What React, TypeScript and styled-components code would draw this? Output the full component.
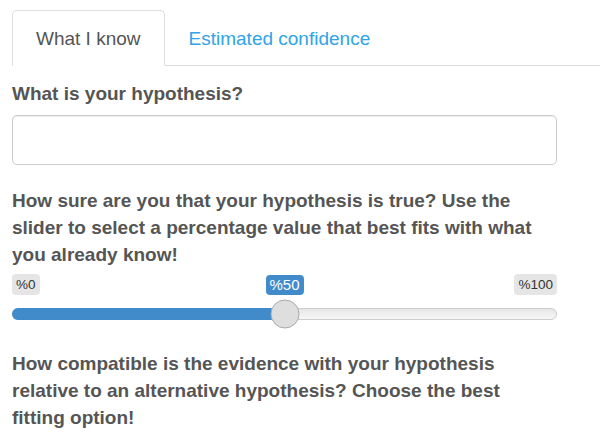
import React from "react";
import styled, { createGlobalStyle } from "styled-components";

const GlobalStyle = createGlobalStyle`
  html, body {
    margin: 0;
    padding: 0;
    background: #ffffff;
  }
  body {
    font-family: "Liberation Sans", Arial, Helvetica, sans-serif;
    color: #555555;
    font-size: 19px;
    line-height: 27px;
  }
  * { box-sizing: border-box; }
`;

const Page = styled.div`
  padding: 10px 0 0 12px;
`;

const TabList = styled.div`
  display: flex;
  border-bottom: 1px solid #dddddd;
`;

const Tab = styled.div<{ $active?: boolean }>`
  padding: 14px 23px 13px;
  margin-right: 0;
  margin-bottom: -1px;
  font-size: 19px;
  line-height: 27px;
  border: 1px solid ${(p) => (p.$active ? "#dddddd" : "transparent")};
  border-bottom-color: ${(p) => (p.$active ? "#ffffff" : "transparent")};
  border-radius: 5px 5px 0 0;
  background: ${(p) => (p.$active ? "#ffffff" : "transparent")};
  color: ${(p) => (p.$active ? "#555555" : "#2fa4e7")};
  cursor: pointer;
`;

const Form = styled.div`
  width: 545px;
  padding-top: 14px;
`;

const Group = styled.div<{ $gap?: number }>`
  margin-bottom: ${(p) => p.$gap ?? 22}px;
`;

const Label = styled.div`
  font-weight: bold;
  font-size: 19px;
  line-height: 27px;
  margin-bottom: 8px;
`;

const TextInput = styled.input`
  display: block;
  width: 545px;
  height: 50px;
  border: 1px solid #cccccc;
  border-radius: 5px;
  box-shadow: inset 0 1px 1px rgba(0, 0, 0, 0.075);
  padding: 8px 16px;
  font-family: inherit;
  font-size: 19px;
  color: #555555;
  outline: none;
`;

const Slider = styled.div`
  position: relative;
  margin-top: -2px;
`;

const LabelsRow = styled.div`
  position: relative;
  display: flex;
  justify-content: space-between;
  align-items: flex-start;
  height: 21px;
`;

const EdgeTag = styled.span`
  display: inline-block;
  font-size: 13.5px;
  line-height: 19px;
  padding: 1px 4px;
  color: #333333;
  background: rgba(0, 0, 0, 0.1);
  border-radius: 4px;
`;

const ValueTag = styled.span`
  position: absolute;
  top: 1px;
  left: 50%;
  transform: translateX(-50%);
  font-size: 15px;
  line-height: 18px;
  padding: 1px 4px;
  color: #ffffff;
  background: #428bca;
  border-radius: 4px;
`;

const Track = styled.div`
  position: relative;
  margin-top: 13px;
  height: 12px;
  border: 1px solid #cccccc;
  border-radius: 16px;
  background: linear-gradient(to bottom, #dedede -50%, #ffffff 150%);
`;

const Fill = styled.div`
  position: absolute;
  left: -1px;
  top: -1px;
  bottom: -1px;
  background: #428bca;
  border-radius: 16px 0 0 16px;
`;

const Thumb = styled.div`
  position: absolute;
  top: 50%;
  width: 29px;
  height: 29px;
  transform: translate(-50%, -50%);
  border: 1px solid #aaaaaa;
  border-radius: 50%;
  background: #dedede;
`;

export default function App() {
  const value = 50;
  return (
    <>
      <GlobalStyle />
      <Page>
        <TabList>
          <Tab $active>What I know</Tab>
          <Tab>Estimated confidence</Tab>
        </TabList>
        <Form>
          <Group>
            <Label>What is your hypothesis?</Label>
            <TextInput type="text" />
          </Group>
          <Group $gap={30}>
            <Label>
              How sure are you that your hypothesis is true? Use the slider to
              select a percentage value that best fits with what you already
              know!
            </Label>
            <Slider>
              <LabelsRow>
                <EdgeTag>%0</EdgeTag>
                <ValueTag style={{ left: `${value}%` }}>%{value}</ValueTag>
                <EdgeTag>%100</EdgeTag>
              </LabelsRow>
              <Track>
                <Fill style={{ width: `${value}%` }} />
                <Thumb style={{ left: `${value}%` }} />
              </Track>
            </Slider>
          </Group>
          <Group>
            <Label>
              How compatible is the evidence with your hypothesis relative to
              an alternative hypothesis? Choose the best fitting option!
            </Label>
          </Group>
        </Form>
      </Page>
    </>
  );
}
